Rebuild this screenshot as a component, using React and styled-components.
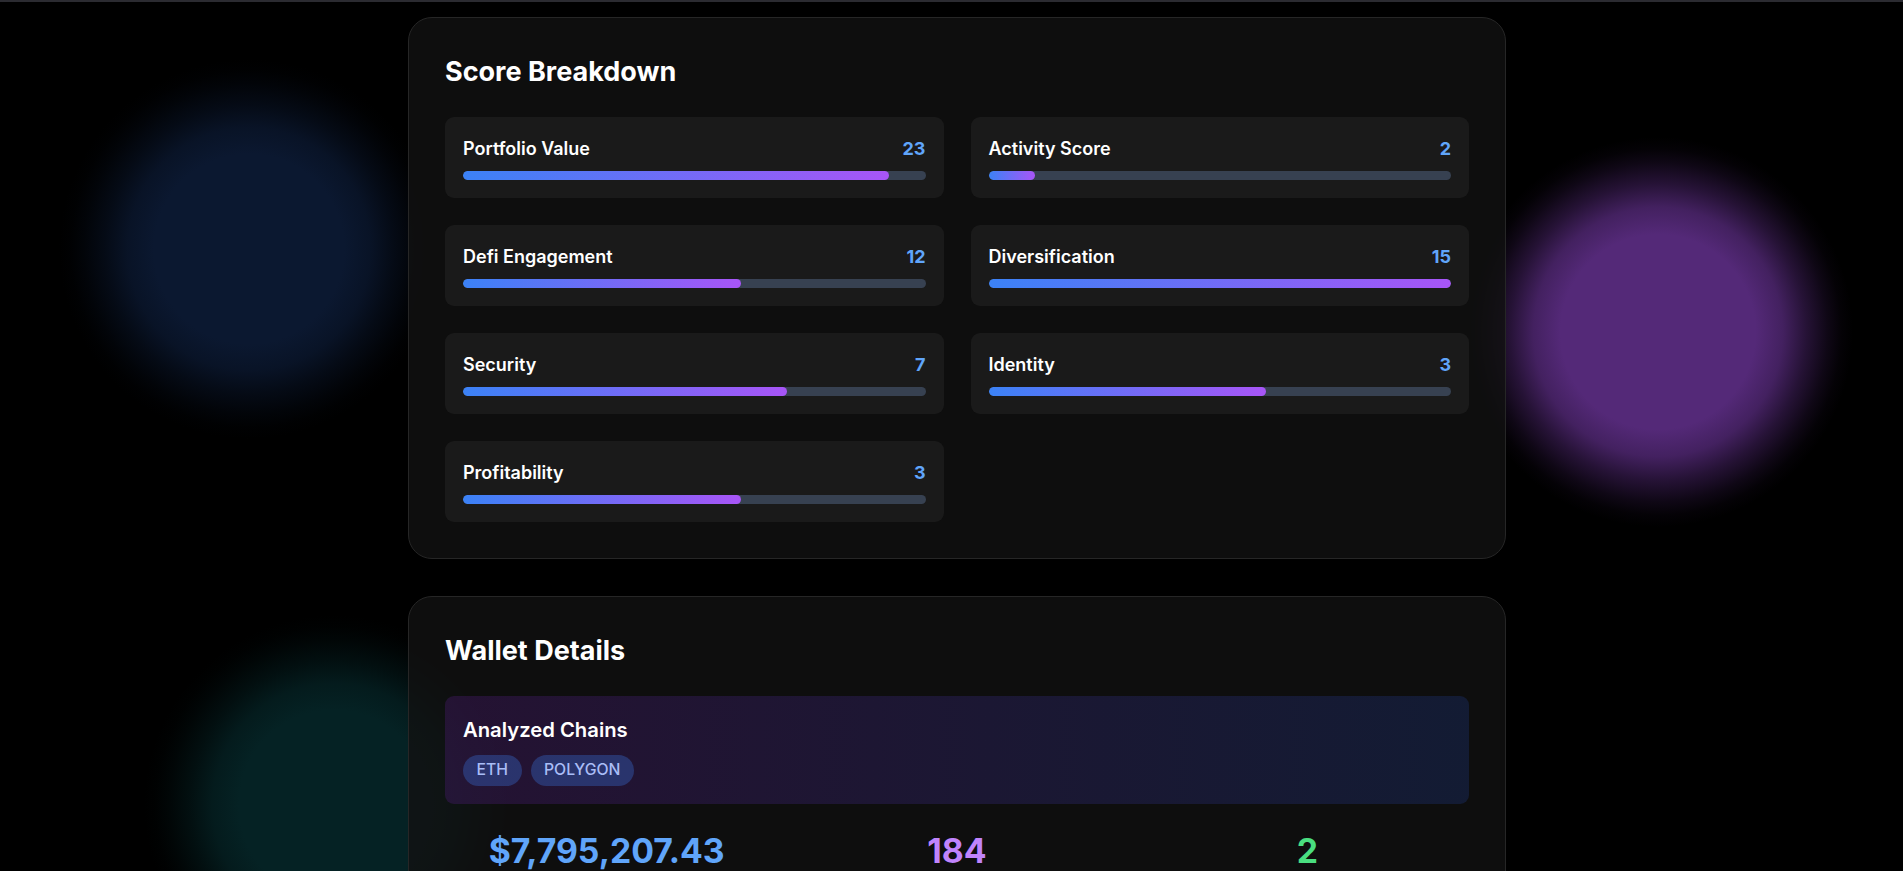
import React from "react";
import styled, { createGlobalStyle } from "styled-components";

const scores = [
  { label: "Portfolio Value", value: 23, max: 25 },
  { label: "Activity Score", value: 2, max: 20 },
  { label: "Defi Engagement", value: 12, max: 20 },
  { label: "Diversification", value: 15, max: 15 },
  { label: "Security", value: 7, max: 10 },
  { label: "Identity", value: 3, max: 5 },
  { label: "Profitability", value: 3, max: 5 },
];

const chains = ["ETH", "POLYGON"];

const stats = [
  { value: "$7,795,207.43", label: "Total Value", color: "#60a5fa" },
  { value: "184", label: "Transactions", color: "#c084fc" },
  { value: "2", label: "Chains", color: "#4ade80" },
];

const App = () => {
  return (
    <>
      <GlobalStyle />
      <TopLine />
      <Page>
        <Card>
          <Title>Score Breakdown</Title>
          <ScoreGrid>
            {scores.map((s) => (
              <ScoreItem key={s.label}>
                <ScoreRow>
                  <ScoreLabel>{s.label}</ScoreLabel>
                  <ScoreValue>{s.value}</ScoreValue>
                </ScoreRow>
                <Track>
                  <Fill style={{ width: `${(s.value / s.max) * 100}%` }} />
                </Track>
              </ScoreItem>
            ))}
          </ScoreGrid>
        </Card>

        <Card>
          <Title>Wallet Details</Title>
          <ChainsBox>
            <ChainsHeading>Analyzed Chains</ChainsHeading>
            <ChipRow>
              {chains.map((c) => (
                <Chip key={c}>{c}</Chip>
              ))}
            </ChipRow>
          </ChainsBox>
          <StatsGrid>
            {stats.map((s) => (
              <Stat key={s.label}>
                <StatValue $color={s.color}>{s.value}</StatValue>
                <StatLabel>{s.label}</StatLabel>
              </Stat>
            ))}
          </StatsGrid>
        </Card>
      </Page>
    </>
  );
};

export default App;

// soft blurred blob, solid core then eased falloff
const blob = (size, x, y, rgb) =>
  `radial-gradient(circle ${size}px at ${x}px ${y}px,
    rgba(${rgb}, 1) 0%,
    rgba(${rgb}, 1) 50%,
    rgba(${rgb}, 0.8) 64%,
    rgba(${rgb}, 0.45) 76%,
    rgba(${rgb}, 0.18) 87%,
    rgba(${rgb}, 0.05) 94%,
    rgba(${rgb}, 0) 100%)`;

const GlobalStyle = createGlobalStyle`
  * {
    box-sizing: border-box;
  }
  body {
    margin: 0;
    background-color: #000;
    background-image:
      ${blob(190, 249, 249, "11, 24, 48")},
      ${blob(195, 1658, 332, "84, 41, 120")},
      ${blob(190, 334, 805, "5, 34, 36")};
    background-attachment: fixed;
    background-repeat: no-repeat;
    font-family: Inter, "Liberation Sans", sans-serif;
    color: #fff;
  }
`;

const TopLine = styled.div`
  height: 2px;
  background: #2b2b31;
`;

const Page = styled.main`
  display: flex;
  flex-direction: column;
  align-items: center;
  gap: 37px;
  padding: 15px 0 60px 11px;
`;

const Card = styled.section`
  width: 1098px;
  padding: 36px;
  border: 1px solid #262626;
  border-radius: 24px;
  background: rgba(18, 18, 18, 0.8);
`;

const Title = styled.h2`
  margin: 0 0 27px;
  font-size: 27px;
  line-height: 36px;
  font-weight: 700;
  color: #fff;
`;

const ScoreGrid = styled.div`
  display: grid;
  grid-template-columns: 1fr 1fr;
  gap: 27px;
`;

const ScoreItem = styled.div`
  padding: 18px;
  border-radius: 9px;
  background: #1a1a1a;
`;

const ScoreRow = styled.div`
  display: flex;
  align-items: center;
  justify-content: space-between;
  height: 27px;
  margin-bottom: 9px;
`;

const ScoreLabel = styled.span`
  font-size: 18px;
  line-height: 27px;
  font-weight: 600;
  color: #fff;
`;

const ScoreValue = styled.span`
  font-size: 18px;
  line-height: 27px;
  font-weight: 700;
  color: #60a5fa;
`;

const Track = styled.div`
  height: 9px;
  border-radius: 999px;
  background: #374151;
  overflow: hidden;
`;

const Fill = styled.div`
  height: 100%;
  border-radius: 999px;
  background: linear-gradient(to right, #3b82f6, #a855f7);
`;

const ChainsBox = styled.div`
  padding: 18px;
  border-radius: 9px;
  background: linear-gradient(to right, rgba(88, 28, 135, 0.3), rgba(30, 58, 138, 0.3));
`;

const ChainsHeading = styled.h3`
  margin: 0 0 9px;
  font-size: 20.25px;
  line-height: 31.5px;
  font-weight: 600;
  color: #fff;
`;

const ChipRow = styled.div`
  display: flex;
  flex-wrap: wrap;
  gap: 9px;
`;

const Chip = styled.span`
  padding: 4.5px 13.5px;
  border-radius: 999px;
  background: rgba(59, 130, 246, 0.3);
  color: #a9bdf7;
  font-size: 15.75px;
  line-height: 22.5px;
  font-weight: 500;
`;

const StatsGrid = styled.div`
  display: grid;
  grid-template-columns: repeat(3, 1fr);
  gap: 27px;
  margin-top: 27px;
`;

const Stat = styled.div`
  text-align: center;
`;

const StatValue = styled.div`
  font-size: 33.75px;
  line-height: 40.5px;
  font-weight: 700;
  color: ${(p) => p.$color};
`;

const StatLabel = styled.div`
  margin-top: 4.5px;
  font-size: 15.75px;
  line-height: 22.5px;
  color: #9ca3af;
`;
